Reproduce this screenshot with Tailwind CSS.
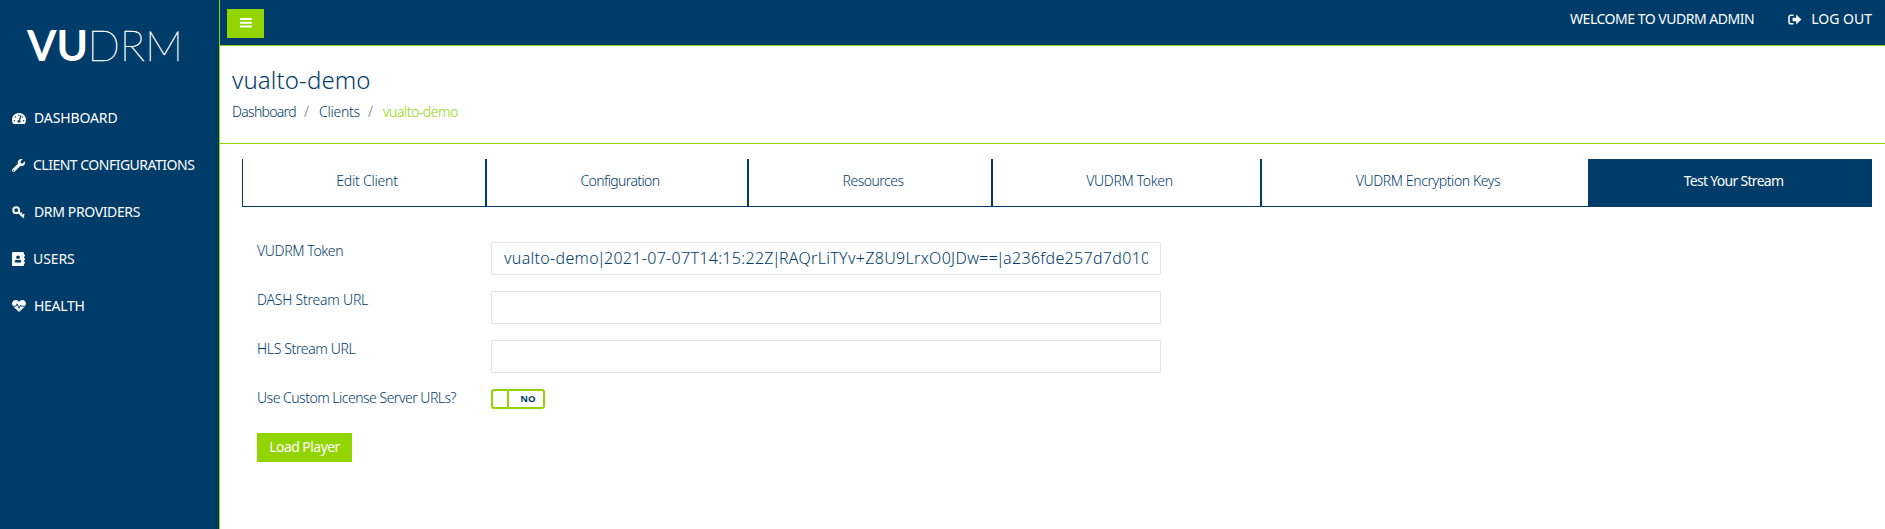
<!DOCTYPE html>
<html lang="en">
<head>
<meta charset="utf-8">
<title>VUDRM Admin</title>
<script src="https://cdn.jsdelivr.net/npm/@tailwindcss/browser@4"></script>
</head>
<body class="flex h-screen overflow-hidden bg-white font-['Noto_Sans',sans-serif] text-sm leading-5 font-light text-[#003c69]">
<aside class="flex w-[220px] shrink-0 flex-col border-r border-[#92d400] bg-[#003c69] font-normal text-white">
  <svg class="mt-2 ml-[22px] h-[68px] w-44 overflow-visible" viewBox="0 -14 176 68" fill="#fff" aria-label="VUDRM">
    <text x="5" y="38.5" font-family="Lato, sans-serif" font-weight="700" font-size="42.5" textLength="61" lengthAdjust="spacingAndGlyphs">VU</text>
    <text x="65.5" y="38.5" font-family="Lato, sans-serif" font-weight="100" font-size="42.5" stroke="#fff" stroke-width=".45" textLength="95.5" lengthAdjust="spacingAndGlyphs">DRM</text>
  </svg>
  <nav class="mt-8 flex flex-col gap-[27px] pl-3 whitespace-nowrap">
    <a class="flex h-5 items-center"><svg class="mr-2 h-[13px] w-[14px]" viewBox="0 0 576 512" fill="#fff"><path d="M288 32C128.94 32 0 160.94 0 320c0 52.8 14.25 102.26 39.06 144.8 5.61 9.62 16.3 15.2 27.44 15.2h443c11.14 0 21.83-5.58 27.44-15.2C561.75 422.26 576 372.8 576 320c0-159.06-128.94-288-288-288zm0 64c14.71 0 26.58 10.13 30.32 23.65-1.11 2.26-2.64 4.23-3.45 6.67l-9.22 27.67c-5.13 3.49-10.97 6.01-17.64 6.01-17.67 0-32-14.33-32-32S270.33 96 288 96zM96 384c-17.67 0-32-14.33-32-32s14.33-32 32-32 32 14.33 32 32-14.33 32-32 32zm48-160c-17.67 0-32-14.33-32-32s14.33-32 32-32 32 14.33 32 32-14.33 32-32 32zm246.77-72.41l-61.33 184C343.13 347.33 352 364.54 352 384c0 11.72-3.38 22.55-8.88 32H232.88c-5.5-9.45-8.88-20.28-8.88-32 0-33.94 26.5-61.43 59.9-63.59l61.34-184.01c4.17-12.56 17.73-19.45 30.36-15.17 12.57 4.19 19.35 17.79 15.17 30.36zm14.66 57.2l15.52-46.55c3.47-1.29 7.13-2.23 11.05-2.23 17.67 0 32 14.33 32 32s-14.33 32-32 32c-11.38-.01-20.89-6.28-26.57-15.22zM480 384c-17.67 0-32-14.33-32-32s14.33-32 32-32 32 14.33 32 32-14.33 32-32 32z"/></svg><span class="tracking-[-0.12px]">DASHBOARD</span></a>
    <a class="flex h-5 items-center"><svg class="mr-2 size-[13px]" viewBox="0 0 512 512" fill="#fff"><path d="M507.73 109.1c-2.24-9.03-13.54-12.09-20.12-5.51l-74.36 74.36-67.88-11.31-11.31-67.88 74.36-74.36c6.62-6.62 3.43-17.9-5.66-20.16-47.38-11.74-99.55.91-136.58 37.93-39.64 39.64-50.55 97.1-34.05 147.2L18.74 402.76c-24.99 24.99-24.99 65.51 0 90.5 24.99 24.99 65.51 24.99 90.5 0l213.21-213.21c50.12 16.71 107.47 5.68 147.37-34.22 37.07-37.07 49.7-89.32 37.91-136.73zM64 472c-13.25 0-24-10.75-24-24 0-13.26 10.75-24 24-24s24 10.74 24 24c0 13.25-10.75 24-24 24z"/></svg><span class="tracking-[-0.5px]">CLIENT CONFIGURATIONS</span></a>
    <a class="flex h-5 items-center"><svg class="mr-2 size-[13px]" viewBox="0 0 13 13" fill="none" stroke="#fff"><circle cx="4.2" cy="4.2" r="2.9" stroke-width="2"/><path d="M6.2 6.2 11.9 11.6M10.2 10.2l2-2M8.2 8.2l1.6-1.6" stroke-width="1.7"/></svg><span class="pl-px tracking-[-0.37px]">DRM PROVIDERS</span></a>
    <a class="flex h-5 items-center"><svg class="mr-2 h-[14px] w-[13px]" viewBox="0 0 448 512" preserveAspectRatio="none" fill="#fff"><path d="M436 160c6.6 0 12-5.4 12-12v-40c0-6.6-5.4-12-12-12h-20V48c0-26.5-21.5-48-48-48H48C21.5 0 0 21.5 0 48v416c0 26.5 21.5 48 48 48h320c26.5 0 48-21.5 48-48v-48h20c6.6 0 12-5.4 12-12v-40c0-6.6-5.4-12-12-12h-20v-64h20c6.6 0 12-5.4 12-12v-40c0-6.6-5.4-12-12-12h-20v-64h20zm-228-32c35.3 0 64 28.7 64 64s-28.7 64-64 64-64-28.7-64-64 28.7-64 64-64zm112 236.8c0 10.6-10 19.2-22.4 19.2H118.4C106 384 96 375.4 96 364.8v-19.2c0-31.8 30.1-57.6 67.2-57.6h5c12.3 5.1 25.7 8 39.8 8s27.6-2.9 39.8-8h5c37.1 0 67.2 25.8 67.2 57.6v19.2z"/></svg><span class="tracking-[-0.1px]">USERS</span></a>
    <a class="flex h-5 items-center"><svg class="mr-2 h-3 w-[14px]" viewBox="0 0 14 12"><path d="M7 12 1.2 6.4C-.3 4.8-.3 2.4 1.1 1.1 2.6-.3 5-.3 6.4 1.2L7 1.8l.6-.6C9-.3 11.4-.3 12.9 1.1c1.4 1.3 1.4 3.7-.1 5.3z" fill="#fff"/><path d="M1 6.2h3.2l1-2.4 1.8 4.6 1.5-3.2.6 1H13" fill="none" stroke="#003c69" stroke-width=".9"/></svg><span class="tracking-[-0.3px]">HEALTH</span></a>
  </nav>
</aside>
<div class="flex min-w-0 flex-1 flex-col">
  <header class="flex h-[46px] shrink-0 items-start justify-between border-b border-[#92d400] bg-[#003c69] pr-[13px] pl-[7px] font-normal text-white">
    <button class="mt-[9px] flex h-[29px] w-[37px] justify-center bg-[#92d400] pt-[8px]"><svg class="h-[11px] w-3" viewBox="0 0 12 11" fill="#fff"><rect y="1" width="12" height="2" rx=".4"/><rect y="4.7" width="12" height="2" rx=".4"/><rect y="8.4" width="12" height="2" rx=".4"/></svg></button>
    <div class="mt-[9px] flex items-center whitespace-nowrap">
      <span class="tracking-[-0.48px]">WELCOME TO VUDRM ADMIN</span>
      <svg class="mr-[9px] ml-[34px] h-[11px] w-[14px]" viewBox="0 0 14 11"><path d="M5.5 1.2H2.8A1.8 1.8 0 0 0 1 3v5a1.8 1.8 0 0 0 1.8 1.8h2.7" fill="none" stroke="#fff" stroke-width="1.5"/><path d="M4.6 3.7h3.6V.6L13.4 5.5l-5.2 4.9V7.3H4.6z" fill="#fff"/></svg>
      <span>LOG OUT</span>
    </div>
  </header>
  <section class="flex h-[98px] shrink-0 flex-col border-b border-[#92d400] pl-3">
    <h1 class="mt-[18px] text-2xl leading-8 font-light tracking-[0.12px]">vualto-demo</h1>
    <div class="mt-[6px] flex whitespace-nowrap">
      <span class="w-[72px] tracking-[-0.7px]">Dashboard</span><span class="w-[15px] text-[#6c757d]">/</span>
      <span class="w-[49px] tracking-[-0.25px]">Clients</span><span class="w-[15px] text-[#6c757d]">/</span>
      <span class="tracking-[-0.48px] text-[#92d400]">vualto-demo</span>
    </div>
  </section>
  <nav class="mt-[15px] mr-[13px] ml-[22px] flex h-12 shrink-0 border-b border-[#003c69] text-center leading-[44px] whitespace-nowrap">
    <a class="w-[244px] border-x border-[#003c69] pl-[6px] tracking-[-0.2px]">Edit Client</a>
    <a class="w-[262px] border-x border-[#003c69] pl-[6px] tracking-[-0.62px]">Configuration</a>
    <a class="w-[244px] border-x border-[#003c69] pl-[6px] tracking-[-0.5px]">Resources</a>
    <a class="w-[269px] border-x border-[#003c69] pl-[6px] tracking-[-0.34px]">VUDRM Token</a>
    <a class="w-[328px] border-x border-[#003c69] pl-[6px] tracking-[-0.4px]">VUDRM Encryption Keys</a>
    <a class="flex-1 bg-[#003c69] pl-[6px] font-normal tracking-[-0.7px] text-white">Test Your Stream</a>
  </nav>
  <form class="mt-[35px] flex flex-col pl-[37px] whitespace-nowrap">
    <div class="flex h-[49px]"><label class="mt-[-1px] w-[234px] tracking-[-0.36px]">VUDRM Token</label><div class="h-[33px] w-[670px] rounded-[1px] border border-[#e4e5e6] px-3"><div class="overflow-hidden text-base leading-[31px] tracking-[0.31px]">vualto-demo<span class="mx-[-2px]">|</span>2021-07-07T14:15:22Z<span class="mx-[-2px]">|</span>RAQrLiTYv+Z8U9LrxO0JDw==<span class="mx-[-2px]">|</span>a236fde257d7d010</div></div></div>
    <div class="flex h-[49px]"><label class="mt-[-1px] w-[234px] tracking-[-0.22px]">DASH Stream URL</label><div class="h-[33px] w-[670px] rounded-[1px] border border-[#e4e5e6]"></div></div>
    <div class="flex h-[49px]"><label class="mt-[-1px] w-[234px] tracking-[-0.35px]">HLS Stream URL</label><div class="h-[33px] w-[670px] rounded-[1px] border border-[#e4e5e6]"></div></div>
    <div class="flex h-[44px]"><label class="mt-[-1px] w-[234px] tracking-[-0.5px]">Use Custom License Server URLs?</label><div class="flex h-5 w-[54px] rounded-[3px] border-2 border-[#92d400]"><span class="w-4 border-r-2 border-[#92d400]"></span><span class="flex-1 pl-[4px] text-center font-['Open_Sans',sans-serif] text-[9.5px] leading-4 font-bold">NO</span></div></div>
    <button type="button" class="h-[29px] w-[95px] bg-[#92d400] pb-px text-center font-normal tracking-[-0.55px] text-white">Load Player</button>
  </form>
</div>
</body>
</html>
